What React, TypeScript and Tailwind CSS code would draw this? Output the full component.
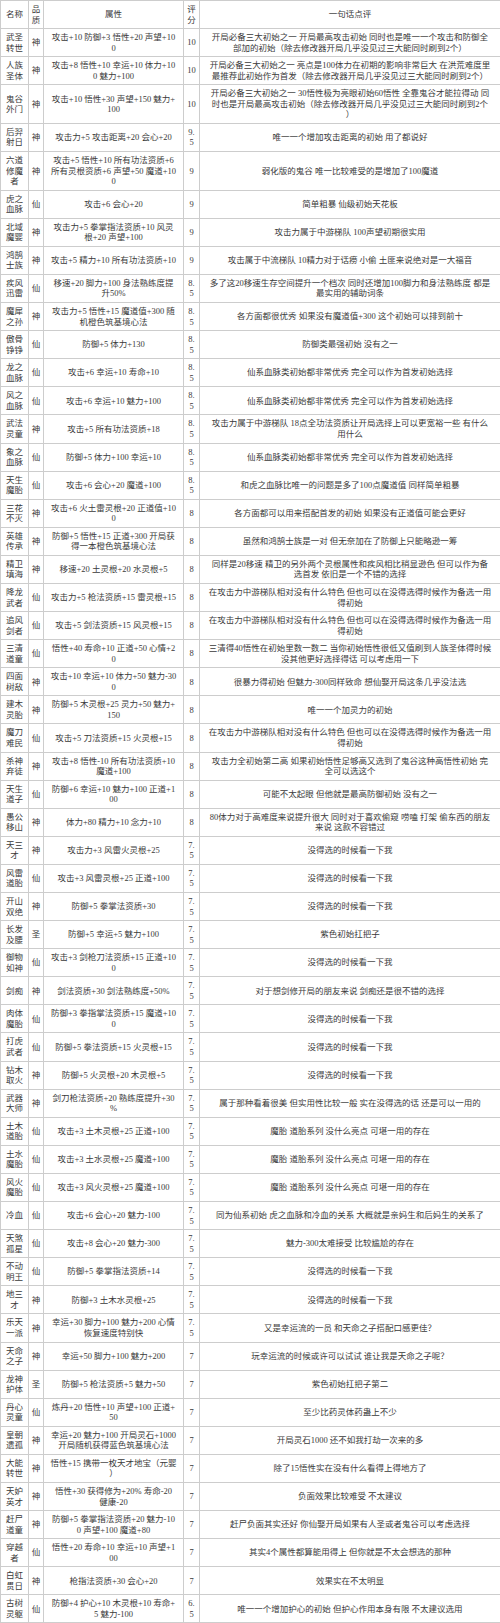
import React from 'react';

// 初始天赋评分表：名称 / 品质 / 属性 / 评分 / 一句话点评
type Row = [string, string, string, string, string];

const SAME = '没得选的时候看一下我';
const XIAN_BLOOD = '仙系血脉类初始都非常优秀 完全可以作为首发初始选择';
const MID = '在攻击力中游梯队相对没有什么特色 但也可以在没得选得时候作为备选一用\n得初始';
const TAI = '魔胎 道胎系列 没什么亮点 可堪一用的存在';

const rows: Row[] = [
  ['武圣转世', '神', '攻击+10 防御+3 悟性+20 声望+10\n0', '10', '开局必备三大初始之一 开局最高攻击初始 同时也是唯一一个攻击和防御全\n部加的初始（除去修改器开局几乎没见过三大能同时刷到2个）'],
  ['人族圣体', '神', '攻击+8 悟性+10 幸运+10 体力+10\n0 魅力+100', '10', '开局必备三大初始之一 亮点是100体力在初期的影响非常巨大 在洪荒难度里\n最推荐此初始作为首发（除去修改器开局几乎没见过三大能同时刷到2个）'],
  ['鬼谷外门', '神', '攻击+10 悟性+30 声望+150 魅力+\n100', '10', '开局必备三大初始之一 30悟性极为亮眼初始60悟性 全靠鬼谷才能拉得动 同\n时也是开局最高攻击初始（除去修改器开局几乎没见过三大能同时刷到2个\n）'],
  ['后羿射日', '神', '攻击力+5 攻击距离+20 会心+20', '9.5', '唯一一个增加攻击距离的初始 用了都说好'],
  ['六道修魔者', '神', '攻击+5 悟性+10 所有功法资质+6\n所有灵根资质+6 声望+50 魔道+10\n0', '9', '弱化版的鬼谷 唯一比较难受的是增加了100魔道'],
  ['虎之血脉', '仙', '攻击+6 会心+20', '9', '简单粗暴 仙级初始天花板'],
  ['北域魔婴', '神', '攻击力+5 拳掌指法资质+10 风灵\n根+20 声望+100', '9', '攻击力属于中游梯队 100声望初期很实用'],
  ['鸿鹄士族', '神', '攻击+5 精力+10 所有功法资质+10', '9', '攻击属于中流梯队 10精力对于话痨 小偷 土匪来说绝对是一大福音'],
  ['疾风迅雷', '仙', '移速+20 脚力+100 身法熟练度提\n升50%', '8.5', '多了这20移速生存空间提升一个档次 同时还增加100脚力和身法熟练度 都是\n最实用的辅助词条'],
  ['魔犀之孙', '神', '攻击力+5 悟性+15 魔道值+300 随\n机橙色筑基境心法', '8.5', '各方面都很优秀 如果没有魔道值+300 这个初始可以排到前十'],
  ['傲骨铮铮', '仙', '防御+5 体力+130', '8.5', '防御类最强初始 没有之一'],
  ['龙之血脉', '仙', '攻击+6 幸运+10 寿命+10', '8.5', XIAN_BLOOD],
  ['风之血脉', '仙', '攻击+6 幸运+10 魅力+100', '8.5', XIAN_BLOOD],
  ['武法灵童', '神', '攻击+5 所有功法资质+18', '8.5', '攻击力属于中游梯队 18点全功法资质让开局选择上可以更宽裕一些 有什么\n用什么'],
  ['象之血脉', '仙', '防御+5 体力+100 幸运+10', '8.5', XIAN_BLOOD],
  ['天生魔胎', '仙', '攻击+6 会心+20 魔道+100', '8.5', '和虎之血脉比唯一的问题是多了100点魔道值 同样简单粗暴'],
  ['三花不灭', '神', '攻击+6 火土雷灵根+20 正道值+10\n0', '8', '各方面都可以用来搭配首发的初始 如果没有正道值可能会更好'],
  ['英雄传承', '神', '防御+5 悟性+15 正道+300 开局获\n得一本橙色筑基境心法', '8', '虽然和鸿鹄士族是一对 但无奈加在了防御上只能略逊一筹'],
  ['精卫填海', '神', '移速+20 土灵根+20 水灵根+5', '8', '同样是20移速 精卫的另外两个灵根属性和疾风相比稍显逊色 但可以作为备\n选首发 依旧是一个不错的选择'],
  ['降龙武者', '仙', '攻击力+5 枪法资质+15 雷灵根+15', '8', MID],
  ['追风剑者', '仙', '攻击+5 剑法资质+15 风灵根+15', '8', MID],
  ['三清道童', '仙', '悟性+40 寿命+10 正道+50 心情+2\n0', '8', '三清得40悟性在初始里数一数二 当你初始悟性很低又值刷到人族圣体得时候\n没其他更好选择得话 可以考虑用一下'],
  ['四面树敌', '神', '攻击+10 幸运+10 体力+50 魅力-30\n0', '8', '很暴力得初始 但魅力-300同样致命 想仙娶开局这条几乎没法选'],
  ['建木灵胎', '神', '防御+5 木灵根+25 灵力+50 魅力+\n150', '8', '唯一一个加灵力的初始'],
  ['魔刀难民', '仙', '攻击+5 刀法资质+15 火灵根+15', '8', MID],
  ['杀神弃徒', '神', '攻击+8 悟性-10 所有功法资质+10\n魔道+100', '8', '攻击力全初始第二高 如果初始悟性足够高又选到了鬼谷这种高悟性初始 完\n全可以选这个'],
  ['天生道子', '仙', '防御+6 幸运+10 魅力+100 正道+1\n00', '8', '可能不太起眼 但他就是最高防御初始 没有之一'],
  ['愚公移山', '神', '体力+80 精力+10 念力+10', '8', '80体力对于高难度来说提升很大 同时对于喜欢偷窥 唠嗑 打架 偷东西的朋友\n来说 这款不容错过'],
  ['天三才', '神', '攻击力+3 风雷火灵根+25', '7.5', SAME],
  ['风雷道胎', '仙', '攻击+3 风雷灵根+25 正道+100', '7.5', SAME],
  ['开山双绝', '神', '防御+5 拳掌法资质+30', '7.5', SAME],
  ['长发及腰', '圣', '防御+5 幸运+5 魅力+100', '7.5', '紫色初始扛把子'],
  ['御物如神', '仙', '攻击+3 剑枪刀法资质+15 正道+10\n0', '7.5', SAME],
  ['剑痴', '神', '剑法资质+30 剑法熟练度+50%', '7.5', '对于想剑修开局的朋友来说 剑痴还是很不错的选择'],
  ['肉体魔胎', '仙', '防御+3 拳指掌法资质+15 魔道+10\n0', '7.5', SAME],
  ['打虎武者', '仙', '防御+5 拳法资质+15 火灵根+15', '7.5', SAME],
  ['钻木取火', '神', '防御+5 火灵根+20 木灵根+5', '7.5', SAME],
  ['武器大师', '神', '剑刀枪法资质+20 熟练度提升+30\n%', '7.5', '属于那种看着很美 但实用性比较一般 实在没得选的话 还是可以一用的'],
  ['土木道胎', '仙', '攻击+3 土木灵根+25 正道+100', '7.5', TAI],
  ['土水魔胎', '仙', '攻击+3 土水灵根+25 魔道+100', '7.5', TAI],
  ['风火魔胎', '仙', '攻击+3 风火灵根+25 魔道+100', '7.5', TAI],
  ['冷血', '仙', '攻击+6 会心+20 魅力-100', '7.5', '同为仙系初始 虎之血脉和冷血的关系 大概就是亲妈生和后妈生的关系了'],
  ['天煞孤星', '仙', '攻击+8 会心+20 魅力-300', '7.5', '魅力-300太难接受 比较尴尬的存在'],
  ['不动明王', '仙', '防御+5 拳掌指法资质+14', '7.5', SAME],
  ['地三才', '神', '防御+3 土木水灵根+25', '7.5', SAME],
  ['乐天一派', '神', '幸运+30 脚力+100 魅力+200 心情\n恢复速度特别快', '7.5', '又是幸运流的一员 和天命之子搭配口感更佳？'],
  ['天命之子', '神', '幸运+50 脚力+100 魅力+200', '7', '玩幸运流的时候或许可以试试 谁让我是天命之子呢？'],
  ['龙神护体', '圣', '防御+5 枪法资质+5 魅力+50', '7', '紫色初始扛把子第二'],
  ['丹心灵童', '仙', '炼丹+20 悟性+10 声望+100 正道+\n50', '7', '至少比药灵体药蛊上不少'],
  ['皇朝遗孤', '神', '幸运+20 魅力+100 开局灵石+1000\n开局随机获得蓝色筑基境心法', '7', '开局灵石1000 还不如我打劫一次来的多'],
  ['大能转世', '神', '悟性+15 携带一枚天才地宝（元婴\n）', '7', '除了15悟性实在没有什么看得上得地方了'],
  ['天妒英才', '神', '悟性+30 获得修为+20% 寿命-20\n健康-20', '7', '负面效果比较难受 不太建议'],
  ['赶尸道童', '神', '防御+5 拳掌指法资质+20 魅力-10\n0 声望+100 魔道+80', '7', '赶尸负面其实还好 你仙娶开局如果有人圣或者鬼谷可以考虑选择'],
  ['穿越者', '仙', '悟性+20 寿命+10 幸运+10 声望+1\n00', '7', '其实4个属性都算能用得上 但你就是不太会想选的那种'],
  ['白虹贯日', '神', '枪指法资质+30 会心+20', '7', '效果实在不太明显'],
  ['古树灵躯', '仙', '防御+4 护心+10 木灵根+10 寿命+\n5 魅力-100', '6.5', '唯一一个增加护心的初始 但护心作用本身有限 不太建议选用'],
];

const td = 'border border-[#cdcdcd] py-[3px] text-center align-middle';

export default function App() {
  return (
    <div className="w-[500px] bg-white text-[#3a3a3a] text-[8.5px] leading-[10.54px] font-['Liberation_Serif','Noto_Sans_CJK_SC',serif]">
      <table className="w-[500px] table-fixed border-collapse">
        <colgroup>
          <col className="w-[28px]" />
          <col className="w-[15px]" />
          <col className="w-[140px]" />
          <col className="w-[16px]" />
          <col className="w-[301px]" />
        </colgroup>
        <thead>
          <tr>
            <th className={`${td} px-[2px] font-normal`}>名称</th>
            <th className={`${td} px-[2px] font-normal`}>品质</th>
            <th className={`${td} px-[3px] font-normal`}>属性</th>
            <th className={`${td} px-[3px] font-normal break-all`}>评分</th>
            <th className={`${td} px-[3px] font-normal`}>一句话点评</th>
          </tr>
        </thead>
        <tbody>
          {rows.map(([name, q, attr, score, note]) => (
            <tr key={name}>
              <td className={`${td} px-[2px] break-all`}>{name}</td>
              <td className={`${td} px-[2px]`}>{q}</td>
              <td className={`${td} px-[3px] whitespace-pre-line`}>{attr}</td>
              <td className={`${td} px-[3px] break-all`}>{score}</td>
              <td className={`${td} px-[4px] whitespace-pre-line`}>{note}</td>
            </tr>
          ))}
        </tbody>
      </table>
    </div>
  );
}
